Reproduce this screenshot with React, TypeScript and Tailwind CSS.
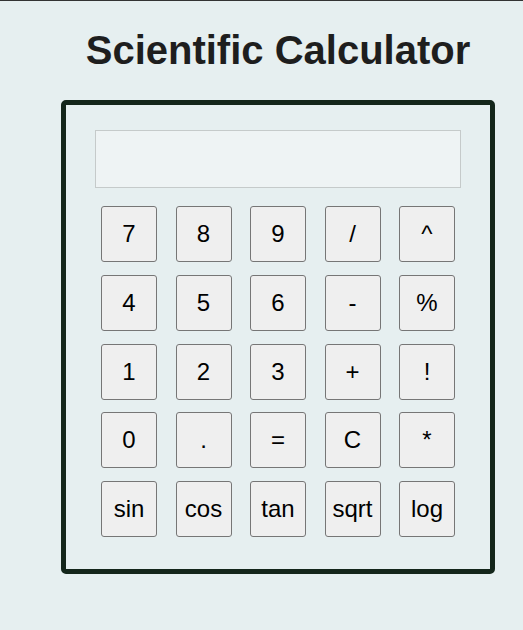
const keys = [
  '7', '8', '9', '/', '^',
  '4', '5', '6', '-', '%',
  '1', '2', '3', '+', '!',
  '0', '.', '=', 'C', '*',
  'sin', 'cos', 'tan', 'sqrt', 'log',
];

export default function App() {
  return (
    <div className="min-h-[630px] border-t border-[#333] bg-[#e6eff0] font-['Liberation_Sans',Arial,sans-serif]">
      <div className="ml-[61px] w-[434px]">
        {/* Title */}
        <h1 className="pt-[26px] text-center text-[40px] font-bold leading-[46px] text-[#1e1e1e]">
          Scientific Calculator
        </h1>

        {/* Calculator body */}
        <div className="mt-[27px] rounded-[5px] border-[5px] border-[#14261b] px-[29px] pt-[25px] pb-[32px]">
          <div className="h-[58px] w-full border border-[#c5caca] bg-[#eef3f4]" />

          <div className="mt-[18px] grid grid-cols-[repeat(5,56px)] justify-center gap-x-[18.5px] gap-y-[12.75px]">
            {keys.map((k) => (
              <button
                key={k}
                className="flex h-[56px] w-[56px] items-center justify-center rounded-[3px] border border-[#767676] bg-[#efefef] text-[24px] text-black"
              >
                {k}
              </button>
            ))}
          </div>
        </div>
      </div>
    </div>
  );
}
